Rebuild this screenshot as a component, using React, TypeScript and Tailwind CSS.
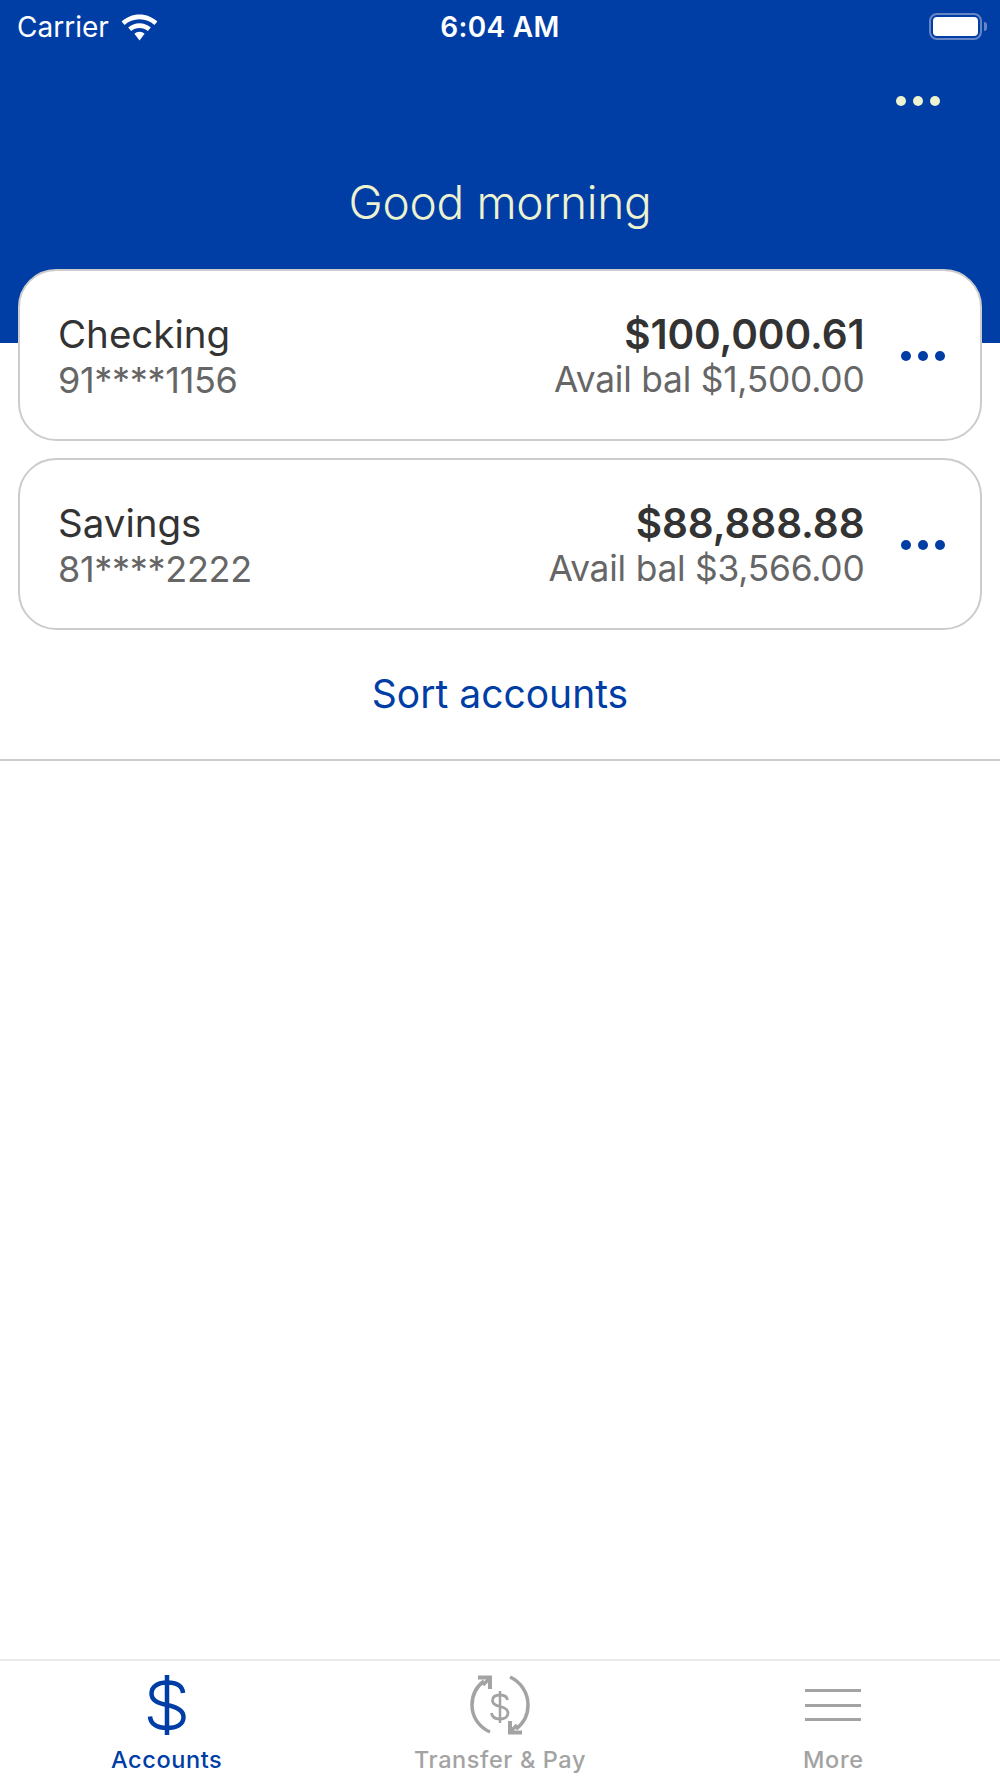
const FONT = "font-['Inter','Liberation_Sans',sans-serif]";

function Dots({ className }: { className: string }) {
  return (
    <div className="flex gap-[7px]">
      <span className={`w-[10px] h-[10px] rounded-full ${className}`} />
      <span className={`w-[10px] h-[10px] rounded-full ${className}`} />
      <span className={`w-[10px] h-[10px] rounded-full ${className}`} />
    </div>
  );
}

function Wifi() {
  return (
    <svg width="37" height="27" viewBox="0 0 37 27" fill="white">
      <path d="M18.5 0.5C25.5 0.5 31.7 3.2 36.4 7.6L33.4 11C29.5 7.4 24.3 5.3 18.5 5.3C12.7 5.3 7.5 7.4 3.6 11L0.6 7.6C5.3 3.2 11.5 0.5 18.5 0.5Z" />
      <path d="M18.5 9.2C22.9 9.2 26.8 10.9 29.8 13.6L26.8 17C24.6 15 21.7 13.9 18.5 13.9C15.3 13.9 12.4 15 10.2 17L7.2 13.6C10.2 10.9 14.1 9.2 18.5 9.2Z" />
      <path d="M18.5 17.7C20.5 17.7 22.3 18.4 23.6 19.7L18.5 26.5L13.4 19.7C14.7 18.4 16.5 17.7 18.5 17.7Z" />
    </svg>
  );
}

function Battery() {
  return (
    <div className="flex items-center gap-[2px] -mt-[2px]">
      <div className="w-[53px] h-[27px] rounded-[8px] border-[2px] border-[#6685c4] p-[2px]">
        <div className="w-full h-full rounded-[4px] bg-white" />
      </div>
      <div className="w-[3px] h-[9px] rounded-r-full bg-[#6685c4]" />
    </div>
  );
}

function AccountCard({ name, num, bal, avail }: { name: string; num: string; bal: string; avail: string }) {
  return (
    <div className="h-[172px] rounded-[38px] border-[2.5px] border-[#cccccc] bg-white flex items-center pl-[38px] pr-[35.5px]">
      <div className="flex-1 flex flex-col pt-[2px]">
        <div className="text-[38.5px] leading-[47px] text-[#333333] tracking-[0px]">{name}</div>
        <div className="text-[36px] leading-[44px] text-[#666666] tracking-[-0.3px]">{num}</div>
      </div>
      <div className="flex flex-col items-end pt-[2px]">
        <div className="text-[40.5px] leading-[47px] font-semibold text-[#333333] tracking-[-0.1px]">{bal}</div>
        <div className="text-[35.3px] leading-[44px] text-[#666666] tracking-[-0.2px]">{avail}</div>
      </div>
      <div className="ml-[36px] pt-[2px]">
        <Dots className="bg-[#003da5]" />
      </div>
    </div>
  );
}

function Tab({ label, active, children }: { label: string; active?: boolean; children: React.ReactNode }) {
  return (
    <div className={`flex-1 flex flex-col items-center pt-[11px] ${active ? "text-[#003da5]" : "text-[#a3a3a3]"}`}>
      <div className="h-[66px] flex items-center justify-center">{children}</div>
      <div className="text-[23.5px] leading-[30px] mt-[7px] tracking-[0.6px] font-medium">{label}</div>
    </div>
  );
}

export default function App() {
  return (
    <div className={`w-[1000px] h-[1778px] bg-white flex flex-col overflow-hidden ${FONT}`}>
      <header className="h-[343px] shrink-0 bg-[#003da5] flex flex-col">
        <div className="h-[54px] flex items-center justify-between pl-[17px] pr-[13px] text-white">
          <div className="flex items-center gap-[12px] w-[300px]">
            <span className="text-[28px] leading-[50px]">Carrier</span>
            <Wifi />
          </div>
          <span className="text-[28px] leading-[50px] font-semibold tracking-[0.3px] -ml-[4px]">6:04 AM</span>
          <div className="w-[300px] flex justify-end">
            <Battery />
          </div>
        </div>
        <div className="flex justify-end pr-[60px] mt-[42px]">
          <Dots className="bg-[#edf2d0]" />
        </div>
        <h1 className="text-center text-[46px] leading-[56px] font-[350] text-[#edf2d0] mt-[68px] tracking-[-0.3px]">Good morning</h1>
      </header>

      <main className="flex-1 flex flex-col -mt-[74px]">
        <div className="flex flex-col gap-[17px] px-[18px]">
          <AccountCard name="Checking" num="91****1156" bal="$100,000.61" avail="Avail bal $1,500.00" />
          <AccountCard name="Savings" num="81****2222" bal="$88,888.88" avail="Avail bal $3,566.00" />
        </div>
        <div className="h-[131px] flex items-center justify-center text-[39px] text-[#003da5] border-b-2 border-[#cccccc]">
          Sort accounts
        </div>
      </main>

      <nav className="h-[119px] shrink-0 border-t-2 border-[#ebebeb] flex">
        <Tab label="Accounts" active>
          <svg width="40" height="62" viewBox="0 0 40 62" fill="none" stroke="#003da5" strokeWidth="4.5">
            <path d="M20 1V61" />
            <path d="M36 19C35.5 12 29.5 8.5 20 8.5C11 8.5 4.5 12.5 4.5 19.5C4.5 26.5 10.5 29 20 31C30 33 36.5 36 36.5 43C36.5 50.5 29.5 54 20 54C10.5 54 3.5 50 3 42.5" />
          </svg>
        </Tab>
        <Tab label="Transfer & Pay">
          <svg width="60" height="62" viewBox="0 0 60 62" fill="none" stroke="#a3a3a3" strokeWidth="3.5">
            <path d="M20 58C9 53 2 43 2 31C2 22 6 13 14 7" />
            <path d="M8 3.500H20V15" strokeWidth="4" />
            <path d="M20 4L13 11" />
            <path d="M40 3C51 8 58 19 58 31C58 40 54 49 46 55" />
            <path d="M40 47V58.500H52" strokeWidth="4" />
            <path d="M40 58L47 51" />
            <path d="M30 17V49" strokeWidth="2.500" />
            <path d="M37.500 26C37 22.500 34 21 30 21C25.500 21 22.500 23 22.500 26.500C22.500 30 25.500 31.500 30 32.500C34.500 33.500 38 35 38 39C38 43 34.500 45 30 45C25.500 45 22 43 21.500 39" strokeWidth="2.800" />
          </svg>
        </Tab>
        <Tab label="More">
          <div className="flex flex-col gap-[11.5px] w-[56px]">
            <div className="h-[3px] bg-[#a3a3a3]" />
            <div className="h-[3px] bg-[#a3a3a3]" />
            <div className="h-[3px] bg-[#a3a3a3]" />
          </div>
        </Tab>
      </nav>
    </div>
  );
}
